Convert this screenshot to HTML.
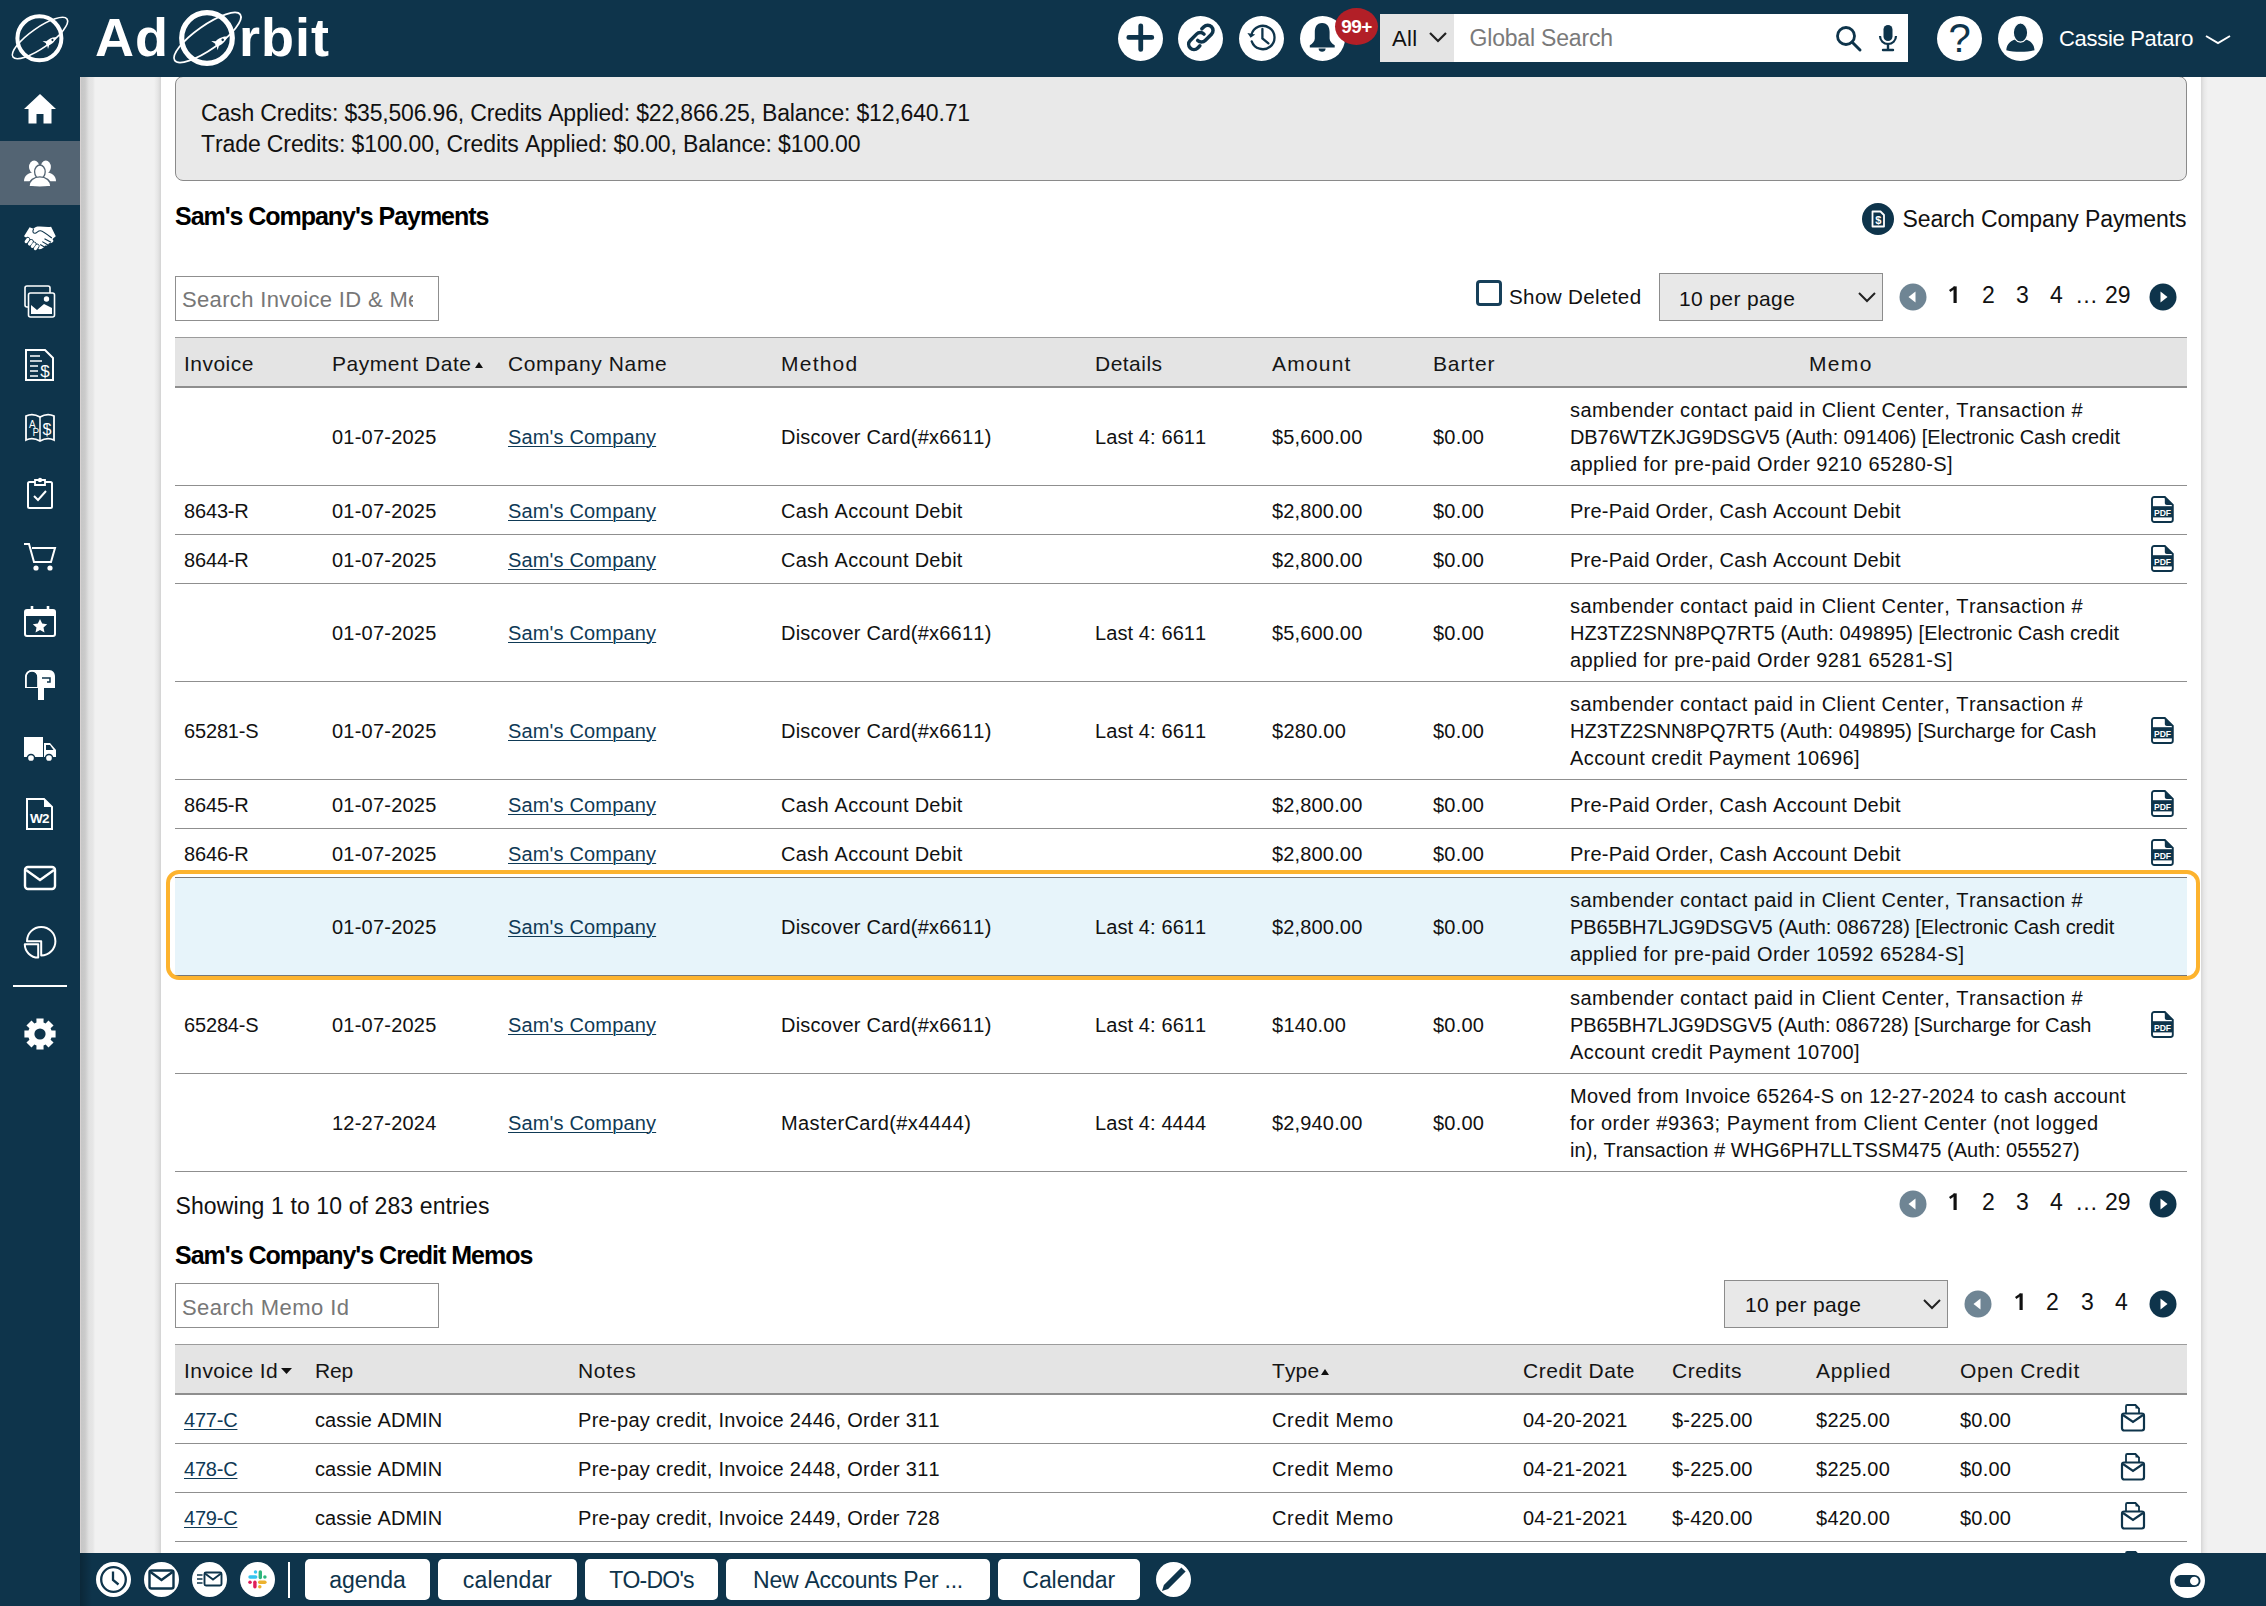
<!DOCTYPE html>
<html><head><meta charset="utf-8"><style>
*{box-sizing:border-box;margin:0;padding:0}
html,body{width:2266px;height:1606px;overflow:hidden;background:#f1f1f1;font-family:"Liberation Sans",sans-serif;color:#111}
.a{position:absolute}
.t{white-space:nowrap;font-kerning:none}
#top{left:0;top:0;width:2266px;height:77px;background:#0e344b}
#side{left:0;top:0;width:80px;height:1606px;background:#0e344b}
#gl{left:80px;top:77px;width:81px;height:1476px;background:linear-gradient(90deg,#d8d3d3 0,#d8d3d3 1px,#c6c6c6 1px,#cbcbcb 5px,#e2e2e2 9px,#e6e6e6 13px,#f1f1f1 15px,#f1f1f1 74px,#e5e5e5 78px,#d3d3d3 81px)}
#content{left:161px;top:77px;width:2040px;height:1476px;background:#fff}
#gr{left:2201px;top:77px;width:65px;height:1476px;background:linear-gradient(90deg,#d6d6d6 0,#e8e8e8 3px,#f1f1f1 7px)}
#bot{left:80px;top:1553px;width:2186px;height:53px;background:#0e344b}
#botsh{left:80px;top:1553px;width:12px;height:53px;background:linear-gradient(90deg,rgba(0,0,0,.25),rgba(0,0,0,0))}
</style></head><body>
<div class="a" id="gl"></div><div class="a" id="gr"></div><div class="a" id="content"></div>
<div class="a" style="left:175px;top:75.5px;width:2012px;height:105.5px;background:#e9e9e9;border:1.5px solid #8a8a8a;border-radius:8px"></div>
<div class="a t" style="left:201px;top:102px;font-size:23px;line-height:23px;letter-spacing:-0.167px;color:#111;font-weight:400;">Cash Credits: $35,506.96, Credits Applied: $22,866.25, Balance: $12,640.71</div>
<div class="a t" style="left:201px;top:133px;font-size:23px;line-height:23px;letter-spacing:-0.104px;color:#111;font-weight:400;">Trade Credits: $100.00, Credits Applied: $0.00, Balance: $100.00</div>
<div class="a t" style="left:175px;top:203.5px;font-size:25px;line-height:25px;letter-spacing:-1.047px;color:#000;font-weight:700;">Sam&#x27;s Company&#x27;s Payments</div>
<svg class="a" style="left:1862px;top:203px" width="32" height="32" viewBox="0 0 32 32"><circle cx="16" cy="16" r="16" fill="#0e344b"/><path d="M10.5 8.5h8l3.5 3.5v11.5h-11.5z" fill="none" stroke="#fff" stroke-width="1.8" stroke-linejoin="round"/><text x="16.3" y="20.5" font-family="Liberation Sans" font-size="11" font-weight="700" fill="#fff" text-anchor="middle">$</text></svg>
<div class="a t" style="left:1902.5px;top:208px;font-size:23px;line-height:23px;letter-spacing:-0.106px;color:#111;font-weight:400;">Search Company Payments</div>
<div class="a" style="left:175px;top:276px;width:264px;height:45px;background:#fff;border:1.5px solid #8f8f8f"></div>
<div class="a" style="left:177px;top:278px;width:236px;height:41px;overflow:hidden">
<div class="a t" style="left:5px;top:11px;font-size:22px;line-height:22px;letter-spacing:0.342px;color:#777;font-weight:400;">Search Invoice ID &amp; Memo</div>
</div>
<div class="a" style="left:1475.5px;top:279.5px;width:26px;height:26px;border:3px solid #17405a;border-radius:4px;background:#fff"></div>
<div class="a t" style="left:1509px;top:287px;font-size:20.6px;line-height:20.6px;letter-spacing:0.352px;color:#111;font-weight:400;">Show Deleted</div>
<div class="a" style="left:1659px;top:273px;width:224px;height:48px;background:#e8e8e8;border:1.5px solid #8c8c8c"></div>
<div class="a t" style="left:1679px;top:288px;font-size:21px;line-height:21px;letter-spacing:0.373px;color:#111;font-weight:400;">10 per page</div>
<svg class="a" style="left:1857px;top:289px" width="20" height="16" viewBox="0 0 20 16"><path d="M2 4l8 8 8-8" fill="none" stroke="#222" stroke-width="2"/></svg>
<svg class="a" style="left:1898.7px;top:282.5px" width="28" height="28" viewBox="0 0 28 28"><circle cx="14" cy="14" r="13.5" fill="#6f8594"/><path d="M16.5 8.5v11l-7-5.5z" fill="#fff"/></svg>
<svg class="a" style="left:2149px;top:282.5px" width="28" height="28" viewBox="0 0 28 28"><circle cx="14" cy="14" r="13.5" fill="#0e344b"/><path d="M11.5 8.5v11l7-5.5z" fill="#fff"/></svg>
<svg class="a" style="left:1947.5px;top:285.5px" width="12" height="18" viewBox="0 0 12 18"><path d="M5.5 0.4H8.7V17H5.5z" fill="#111"/><path d="M1 3.9L6.4 0.2L7.4 2.6L2.4 6.1z" fill="#111"/></svg>
<div class="a t" style="left:1982px;top:283.5px;font-size:23px;line-height:23px;letter-spacing:-0.014px;color:#111;font-weight:400;">2</div>
<div class="a t" style="left:2016px;top:283.5px;font-size:23px;line-height:23px;letter-spacing:-0.014px;color:#111;font-weight:400;">3</div>
<div class="a t" style="left:2050px;top:283.5px;font-size:23px;line-height:23px;letter-spacing:-0.014px;color:#111;font-weight:400;">4</div>
<div class="a t" style="left:2075px;top:283.5px;font-size:23px;line-height:23px;letter-spacing:-11.022px;color:#111;font-weight:400;">…</div>
<div class="a t" style="left:2105px;top:283.5px;font-size:23px;line-height:23px;letter-spacing:-0.014px;color:#111;font-weight:400;">29</div>
<div class="a" style="left:175px;top:337px;width:2012px;height:51px;background:#e4e4e4;border-top:1px solid #9c9c9c;border-bottom:2px solid #8e8e8e"></div>
<div class="a t" style="left:184px;top:353px;font-size:21px;line-height:21px;letter-spacing:0.462px;color:#151515;font-weight:400;">Invoice</div>
<div class="a t" style="left:332px;top:353px;font-size:21px;line-height:21px;letter-spacing:0.542px;color:#151515;font-weight:400;">Payment Date</div>
<div class="a t" style="left:508px;top:353px;font-size:21px;line-height:21px;letter-spacing:0.638px;color:#151515;font-weight:400;">Company Name</div>
<div class="a t" style="left:781px;top:353px;font-size:21px;line-height:21px;letter-spacing:1.233px;color:#151515;font-weight:400;">Method</div>
<div class="a t" style="left:1095px;top:353px;font-size:21px;line-height:21px;letter-spacing:0.472px;color:#151515;font-weight:400;">Details</div>
<div class="a t" style="left:1272px;top:353px;font-size:21px;line-height:21px;letter-spacing:1.193px;color:#151515;font-weight:400;">Amount</div>
<div class="a t" style="left:1433px;top:353px;font-size:21px;line-height:21px;letter-spacing:0.849px;color:#151515;font-weight:400;">Barter</div>
<div class="a t" style="left:1809px;top:353px;font-size:21px;line-height:21px;letter-spacing:1.321px;color:#151515;font-weight:400;">Memo</div>
<svg class="a" style="left:474px;top:360px" width="10" height="10" viewBox="0 0 10 10"><path d="M1 8h8l-4-6z" fill="#111"/></svg>
<div class="a" style="left:175px;top:485px;width:2012px;height:1px;background:#8f8f8f"></div>
<div class="a t" style="left:332px;top:427.0px;font-size:20px;line-height:20px;letter-spacing:0.226px;color:#111;font-weight:400;">01-07-2025</div>
<div class="a t" style="left:508px;top:427.0px;font-size:20px;line-height:20px;letter-spacing:0.159px;color:#0f3a56;font-weight:400;text-decoration:underline;text-underline-offset:1.5px;text-decoration-thickness:1px">Sam&#x27;s Company</div>
<div class="a t" style="left:781px;top:427.0px;font-size:20px;line-height:20px;letter-spacing:0.234px;color:#111;font-weight:400;">Discover Card(#x6611)</div>
<div class="a t" style="left:1095px;top:427.0px;font-size:20px;line-height:20px;letter-spacing:0.101px;color:#111;font-weight:400;">Last 4: 6611</div>
<div class="a t" style="left:1272px;top:427.0px;font-size:20px;line-height:20px;letter-spacing:0.162px;color:#111;font-weight:400;">$5,600.00</div>
<div class="a t" style="left:1433px;top:427.0px;font-size:20px;line-height:20px;letter-spacing:0.223px;color:#111;font-weight:400;">$0.00</div>
<div class="a t" style="left:1570px;top:400.0px;font-size:20px;line-height:20px;letter-spacing:0.445px;color:#111;font-weight:400;">sambender contact paid in Client Center, Transaction #</div>
<div class="a t" style="left:1570px;top:427.0px;font-size:20px;line-height:20px;letter-spacing:-0.086px;color:#111;font-weight:400;">DB76WTZKJG9DSGV5 (Auth: 091406) [Electronic Cash credit</div>
<div class="a t" style="left:1570px;top:454.0px;font-size:20px;line-height:20px;letter-spacing:0.431px;color:#111;font-weight:400;">applied for pre-paid Order 9210 65280-S]</div>
<div class="a" style="left:175px;top:534px;width:2012px;height:1px;background:#8f8f8f"></div>
<div class="a t" style="left:184px;top:500.5px;font-size:20px;line-height:20px;letter-spacing:-0.160px;color:#111;font-weight:400;">8643-R</div>
<div class="a t" style="left:332px;top:500.5px;font-size:20px;line-height:20px;letter-spacing:0.226px;color:#111;font-weight:400;">01-07-2025</div>
<div class="a t" style="left:508px;top:500.5px;font-size:20px;line-height:20px;letter-spacing:0.159px;color:#0f3a56;font-weight:400;text-decoration:underline;text-underline-offset:1.5px;text-decoration-thickness:1px">Sam&#x27;s Company</div>
<div class="a t" style="left:781px;top:500.5px;font-size:20px;line-height:20px;letter-spacing:0.274px;color:#111;font-weight:400;">Cash Account Debit</div>
<div class="a t" style="left:1272px;top:500.5px;font-size:20px;line-height:20px;letter-spacing:0.162px;color:#111;font-weight:400;">$2,800.00</div>
<div class="a t" style="left:1433px;top:500.5px;font-size:20px;line-height:20px;letter-spacing:0.223px;color:#111;font-weight:400;">$0.00</div>
<div class="a t" style="left:1570px;top:500.5px;font-size:20px;line-height:20px;letter-spacing:0.250px;color:#111;font-weight:400;">Pre-Paid Order, Cash Account Debit</div>
<div class="a" style="left:2151px;top:496.0px;width:23px;height:27px"><svg width="23" height="27" viewBox="0 0 23 27"><path d="M3.2 1h10.6l8 8v14.8c0 1.3-1 2.2-2.2 2.2H3.2C2 26 1 25.1 1 23.8V3.2C1 2 2 1 3.2 1z" fill="#fff" stroke="#0e344b" stroke-width="1.9"/><path d="M13.8 1v6c0 1.1.9 2 2 2h6z" fill="#0e344b"/><rect x="1" y="10.2" width="20.8" height="11.2" fill="#0e344b"/><text x="11.4" y="19.6" font-family="Liberation Sans" font-size="8.6" font-weight="700" fill="#fff" text-anchor="middle" letter-spacing="-0.2">PDF</text></svg></div>
<div class="a" style="left:175px;top:583px;width:2012px;height:1px;background:#8f8f8f"></div>
<div class="a t" style="left:184px;top:549.5px;font-size:20px;line-height:20px;letter-spacing:-0.160px;color:#111;font-weight:400;">8644-R</div>
<div class="a t" style="left:332px;top:549.5px;font-size:20px;line-height:20px;letter-spacing:0.226px;color:#111;font-weight:400;">01-07-2025</div>
<div class="a t" style="left:508px;top:549.5px;font-size:20px;line-height:20px;letter-spacing:0.159px;color:#0f3a56;font-weight:400;text-decoration:underline;text-underline-offset:1.5px;text-decoration-thickness:1px">Sam&#x27;s Company</div>
<div class="a t" style="left:781px;top:549.5px;font-size:20px;line-height:20px;letter-spacing:0.274px;color:#111;font-weight:400;">Cash Account Debit</div>
<div class="a t" style="left:1272px;top:549.5px;font-size:20px;line-height:20px;letter-spacing:0.162px;color:#111;font-weight:400;">$2,800.00</div>
<div class="a t" style="left:1433px;top:549.5px;font-size:20px;line-height:20px;letter-spacing:0.223px;color:#111;font-weight:400;">$0.00</div>
<div class="a t" style="left:1570px;top:549.5px;font-size:20px;line-height:20px;letter-spacing:0.250px;color:#111;font-weight:400;">Pre-Paid Order, Cash Account Debit</div>
<div class="a" style="left:2151px;top:545.0px;width:23px;height:27px"><svg width="23" height="27" viewBox="0 0 23 27"><path d="M3.2 1h10.6l8 8v14.8c0 1.3-1 2.2-2.2 2.2H3.2C2 26 1 25.1 1 23.8V3.2C1 2 2 1 3.2 1z" fill="#fff" stroke="#0e344b" stroke-width="1.9"/><path d="M13.8 1v6c0 1.1.9 2 2 2h6z" fill="#0e344b"/><rect x="1" y="10.2" width="20.8" height="11.2" fill="#0e344b"/><text x="11.4" y="19.6" font-family="Liberation Sans" font-size="8.6" font-weight="700" fill="#fff" text-anchor="middle" letter-spacing="-0.2">PDF</text></svg></div>
<div class="a" style="left:175px;top:681px;width:2012px;height:1px;background:#8f8f8f"></div>
<div class="a t" style="left:332px;top:623.0px;font-size:20px;line-height:20px;letter-spacing:0.226px;color:#111;font-weight:400;">01-07-2025</div>
<div class="a t" style="left:508px;top:623.0px;font-size:20px;line-height:20px;letter-spacing:0.159px;color:#0f3a56;font-weight:400;text-decoration:underline;text-underline-offset:1.5px;text-decoration-thickness:1px">Sam&#x27;s Company</div>
<div class="a t" style="left:781px;top:623.0px;font-size:20px;line-height:20px;letter-spacing:0.234px;color:#111;font-weight:400;">Discover Card(#x6611)</div>
<div class="a t" style="left:1095px;top:623.0px;font-size:20px;line-height:20px;letter-spacing:0.101px;color:#111;font-weight:400;">Last 4: 6611</div>
<div class="a t" style="left:1272px;top:623.0px;font-size:20px;line-height:20px;letter-spacing:0.162px;color:#111;font-weight:400;">$5,600.00</div>
<div class="a t" style="left:1433px;top:623.0px;font-size:20px;line-height:20px;letter-spacing:0.223px;color:#111;font-weight:400;">$0.00</div>
<div class="a t" style="left:1570px;top:596.0px;font-size:20px;line-height:20px;letter-spacing:0.445px;color:#111;font-weight:400;">sambender contact paid in Client Center, Transaction #</div>
<div class="a t" style="left:1570px;top:623.0px;font-size:20px;line-height:20px;letter-spacing:0.021px;color:#111;font-weight:400;">HZ3TZ2SNN8PQ7RT5 (Auth: 049895) [Electronic Cash credit</div>
<div class="a t" style="left:1570px;top:650.0px;font-size:20px;line-height:20px;letter-spacing:0.431px;color:#111;font-weight:400;">applied for pre-paid Order 9281 65281-S]</div>
<div class="a" style="left:175px;top:779px;width:2012px;height:1px;background:#8f8f8f"></div>
<div class="a t" style="left:184px;top:721.0px;font-size:20px;line-height:20px;letter-spacing:-0.158px;color:#111;font-weight:400;">65281-S</div>
<div class="a t" style="left:332px;top:721.0px;font-size:20px;line-height:20px;letter-spacing:0.226px;color:#111;font-weight:400;">01-07-2025</div>
<div class="a t" style="left:508px;top:721.0px;font-size:20px;line-height:20px;letter-spacing:0.159px;color:#0f3a56;font-weight:400;text-decoration:underline;text-underline-offset:1.5px;text-decoration-thickness:1px">Sam&#x27;s Company</div>
<div class="a t" style="left:781px;top:721.0px;font-size:20px;line-height:20px;letter-spacing:0.234px;color:#111;font-weight:400;">Discover Card(#x6611)</div>
<div class="a t" style="left:1095px;top:721.0px;font-size:20px;line-height:20px;letter-spacing:0.101px;color:#111;font-weight:400;">Last 4: 6611</div>
<div class="a t" style="left:1272px;top:721.0px;font-size:20px;line-height:20px;letter-spacing:0.255px;color:#111;font-weight:400;">$280.00</div>
<div class="a t" style="left:1433px;top:721.0px;font-size:20px;line-height:20px;letter-spacing:0.223px;color:#111;font-weight:400;">$0.00</div>
<div class="a t" style="left:1570px;top:694.0px;font-size:20px;line-height:20px;letter-spacing:0.445px;color:#111;font-weight:400;">sambender contact paid in Client Center, Transaction #</div>
<div class="a t" style="left:1570px;top:721.0px;font-size:20px;line-height:20px;letter-spacing:-0.011px;color:#111;font-weight:400;">HZ3TZ2SNN8PQ7RT5 (Auth: 049895) [Surcharge for Cash</div>
<div class="a t" style="left:1570px;top:748.0px;font-size:20px;line-height:20px;letter-spacing:0.418px;color:#111;font-weight:400;">Account credit Payment 10696]</div>
<div class="a" style="left:2151px;top:716.5px;width:23px;height:27px"><svg width="23" height="27" viewBox="0 0 23 27"><path d="M3.2 1h10.6l8 8v14.8c0 1.3-1 2.2-2.2 2.2H3.2C2 26 1 25.1 1 23.8V3.2C1 2 2 1 3.2 1z" fill="#fff" stroke="#0e344b" stroke-width="1.9"/><path d="M13.8 1v6c0 1.1.9 2 2 2h6z" fill="#0e344b"/><rect x="1" y="10.2" width="20.8" height="11.2" fill="#0e344b"/><text x="11.4" y="19.6" font-family="Liberation Sans" font-size="8.6" font-weight="700" fill="#fff" text-anchor="middle" letter-spacing="-0.2">PDF</text></svg></div>
<div class="a" style="left:175px;top:828px;width:2012px;height:1px;background:#8f8f8f"></div>
<div class="a t" style="left:184px;top:794.5px;font-size:20px;line-height:20px;letter-spacing:-0.160px;color:#111;font-weight:400;">8645-R</div>
<div class="a t" style="left:332px;top:794.5px;font-size:20px;line-height:20px;letter-spacing:0.226px;color:#111;font-weight:400;">01-07-2025</div>
<div class="a t" style="left:508px;top:794.5px;font-size:20px;line-height:20px;letter-spacing:0.159px;color:#0f3a56;font-weight:400;text-decoration:underline;text-underline-offset:1.5px;text-decoration-thickness:1px">Sam&#x27;s Company</div>
<div class="a t" style="left:781px;top:794.5px;font-size:20px;line-height:20px;letter-spacing:0.274px;color:#111;font-weight:400;">Cash Account Debit</div>
<div class="a t" style="left:1272px;top:794.5px;font-size:20px;line-height:20px;letter-spacing:0.162px;color:#111;font-weight:400;">$2,800.00</div>
<div class="a t" style="left:1433px;top:794.5px;font-size:20px;line-height:20px;letter-spacing:0.223px;color:#111;font-weight:400;">$0.00</div>
<div class="a t" style="left:1570px;top:794.5px;font-size:20px;line-height:20px;letter-spacing:0.250px;color:#111;font-weight:400;">Pre-Paid Order, Cash Account Debit</div>
<div class="a" style="left:2151px;top:790.0px;width:23px;height:27px"><svg width="23" height="27" viewBox="0 0 23 27"><path d="M3.2 1h10.6l8 8v14.8c0 1.3-1 2.2-2.2 2.2H3.2C2 26 1 25.1 1 23.8V3.2C1 2 2 1 3.2 1z" fill="#fff" stroke="#0e344b" stroke-width="1.9"/><path d="M13.8 1v6c0 1.1.9 2 2 2h6z" fill="#0e344b"/><rect x="1" y="10.2" width="20.8" height="11.2" fill="#0e344b"/><text x="11.4" y="19.6" font-family="Liberation Sans" font-size="8.6" font-weight="700" fill="#fff" text-anchor="middle" letter-spacing="-0.2">PDF</text></svg></div>
<div class="a" style="left:175px;top:877px;width:2012px;height:1px;background:#8f8f8f"></div>
<div class="a t" style="left:184px;top:843.5px;font-size:20px;line-height:20px;letter-spacing:-0.160px;color:#111;font-weight:400;">8646-R</div>
<div class="a t" style="left:332px;top:843.5px;font-size:20px;line-height:20px;letter-spacing:0.226px;color:#111;font-weight:400;">01-07-2025</div>
<div class="a t" style="left:508px;top:843.5px;font-size:20px;line-height:20px;letter-spacing:0.159px;color:#0f3a56;font-weight:400;text-decoration:underline;text-underline-offset:1.5px;text-decoration-thickness:1px">Sam&#x27;s Company</div>
<div class="a t" style="left:781px;top:843.5px;font-size:20px;line-height:20px;letter-spacing:0.274px;color:#111;font-weight:400;">Cash Account Debit</div>
<div class="a t" style="left:1272px;top:843.5px;font-size:20px;line-height:20px;letter-spacing:0.162px;color:#111;font-weight:400;">$2,800.00</div>
<div class="a t" style="left:1433px;top:843.5px;font-size:20px;line-height:20px;letter-spacing:0.223px;color:#111;font-weight:400;">$0.00</div>
<div class="a t" style="left:1570px;top:843.5px;font-size:20px;line-height:20px;letter-spacing:0.250px;color:#111;font-weight:400;">Pre-Paid Order, Cash Account Debit</div>
<div class="a" style="left:2151px;top:839.0px;width:23px;height:27px"><svg width="23" height="27" viewBox="0 0 23 27"><path d="M3.2 1h10.6l8 8v14.8c0 1.3-1 2.2-2.2 2.2H3.2C2 26 1 25.1 1 23.8V3.2C1 2 2 1 3.2 1z" fill="#fff" stroke="#0e344b" stroke-width="1.9"/><path d="M13.8 1v6c0 1.1.9 2 2 2h6z" fill="#0e344b"/><rect x="1" y="10.2" width="20.8" height="11.2" fill="#0e344b"/><text x="11.4" y="19.6" font-family="Liberation Sans" font-size="8.6" font-weight="700" fill="#fff" text-anchor="middle" letter-spacing="-0.2">PDF</text></svg></div>
<div class="a" style="left:175px;top:877px;width:2012px;height:98px;background:#e7f4fa"></div>
<div class="a" style="left:175px;top:975px;width:2012px;height:1px;background:#777"></div>
<div class="a" style="left:175px;top:877px;width:2012px;height:1px;background:#7a7a7a"></div>
<div class="a t" style="left:332px;top:917.0px;font-size:20px;line-height:20px;letter-spacing:0.226px;color:#111;font-weight:400;">01-07-2025</div>
<div class="a t" style="left:508px;top:917.0px;font-size:20px;line-height:20px;letter-spacing:0.159px;color:#0f3a56;font-weight:400;text-decoration:underline;text-underline-offset:1.5px;text-decoration-thickness:1px">Sam&#x27;s Company</div>
<div class="a t" style="left:781px;top:917.0px;font-size:20px;line-height:20px;letter-spacing:0.234px;color:#111;font-weight:400;">Discover Card(#x6611)</div>
<div class="a t" style="left:1095px;top:917.0px;font-size:20px;line-height:20px;letter-spacing:0.101px;color:#111;font-weight:400;">Last 4: 6611</div>
<div class="a t" style="left:1272px;top:917.0px;font-size:20px;line-height:20px;letter-spacing:0.162px;color:#111;font-weight:400;">$2,800.00</div>
<div class="a t" style="left:1433px;top:917.0px;font-size:20px;line-height:20px;letter-spacing:0.223px;color:#111;font-weight:400;">$0.00</div>
<div class="a t" style="left:1570px;top:890.0px;font-size:20px;line-height:20px;letter-spacing:0.445px;color:#111;font-weight:400;">sambender contact paid in Client Center, Transaction #</div>
<div class="a t" style="left:1570px;top:917.0px;font-size:20px;line-height:20px;letter-spacing:-0.049px;color:#111;font-weight:400;">PB65BH7LJG9DSGV5 (Auth: 086728) [Electronic Cash credit</div>
<div class="a t" style="left:1570px;top:944.0px;font-size:20px;line-height:20px;letter-spacing:0.429px;color:#111;font-weight:400;">applied for pre-paid Order 10592 65284-S]</div>
<div class="a" style="left:175px;top:1073px;width:2012px;height:1px;background:#8f8f8f"></div>
<div class="a t" style="left:184px;top:1015.0px;font-size:20px;line-height:20px;letter-spacing:-0.158px;color:#111;font-weight:400;">65284-S</div>
<div class="a t" style="left:332px;top:1015.0px;font-size:20px;line-height:20px;letter-spacing:0.226px;color:#111;font-weight:400;">01-07-2025</div>
<div class="a t" style="left:508px;top:1015.0px;font-size:20px;line-height:20px;letter-spacing:0.159px;color:#0f3a56;font-weight:400;text-decoration:underline;text-underline-offset:1.5px;text-decoration-thickness:1px">Sam&#x27;s Company</div>
<div class="a t" style="left:781px;top:1015.0px;font-size:20px;line-height:20px;letter-spacing:0.234px;color:#111;font-weight:400;">Discover Card(#x6611)</div>
<div class="a t" style="left:1095px;top:1015.0px;font-size:20px;line-height:20px;letter-spacing:0.101px;color:#111;font-weight:400;">Last 4: 6611</div>
<div class="a t" style="left:1272px;top:1015.0px;font-size:20px;line-height:20px;letter-spacing:0.255px;color:#111;font-weight:400;">$140.00</div>
<div class="a t" style="left:1433px;top:1015.0px;font-size:20px;line-height:20px;letter-spacing:0.223px;color:#111;font-weight:400;">$0.00</div>
<div class="a t" style="left:1570px;top:988.0px;font-size:20px;line-height:20px;letter-spacing:0.445px;color:#111;font-weight:400;">sambender contact paid in Client Center, Transaction #</div>
<div class="a t" style="left:1570px;top:1015.0px;font-size:20px;line-height:20px;letter-spacing:-0.087px;color:#111;font-weight:400;">PB65BH7LJG9DSGV5 (Auth: 086728) [Surcharge for Cash</div>
<div class="a t" style="left:1570px;top:1042.0px;font-size:20px;line-height:20px;letter-spacing:0.418px;color:#111;font-weight:400;">Account credit Payment 10700]</div>
<div class="a" style="left:2151px;top:1010.5px;width:23px;height:27px"><svg width="23" height="27" viewBox="0 0 23 27"><path d="M3.2 1h10.6l8 8v14.8c0 1.3-1 2.2-2.2 2.2H3.2C2 26 1 25.1 1 23.8V3.2C1 2 2 1 3.2 1z" fill="#fff" stroke="#0e344b" stroke-width="1.9"/><path d="M13.8 1v6c0 1.1.9 2 2 2h6z" fill="#0e344b"/><rect x="1" y="10.2" width="20.8" height="11.2" fill="#0e344b"/><text x="11.4" y="19.6" font-family="Liberation Sans" font-size="8.6" font-weight="700" fill="#fff" text-anchor="middle" letter-spacing="-0.2">PDF</text></svg></div>
<div class="a" style="left:175px;top:1171px;width:2012px;height:1px;background:#8f8f8f"></div>
<div class="a t" style="left:332px;top:1113.0px;font-size:20px;line-height:20px;letter-spacing:0.226px;color:#111;font-weight:400;">12-27-2024</div>
<div class="a t" style="left:508px;top:1113.0px;font-size:20px;line-height:20px;letter-spacing:0.159px;color:#0f3a56;font-weight:400;text-decoration:underline;text-underline-offset:1.5px;text-decoration-thickness:1px">Sam&#x27;s Company</div>
<div class="a t" style="left:781px;top:1113.0px;font-size:20px;line-height:20px;letter-spacing:0.384px;color:#111;font-weight:400;">MasterCard(#x4444)</div>
<div class="a t" style="left:1095px;top:1113.0px;font-size:20px;line-height:20px;letter-spacing:0.099px;color:#111;font-weight:400;">Last 4: 4444</div>
<div class="a t" style="left:1272px;top:1113.0px;font-size:20px;line-height:20px;letter-spacing:0.162px;color:#111;font-weight:400;">$2,940.00</div>
<div class="a t" style="left:1433px;top:1113.0px;font-size:20px;line-height:20px;letter-spacing:0.223px;color:#111;font-weight:400;">$0.00</div>
<div class="a t" style="left:1570px;top:1086.0px;font-size:20px;line-height:20px;letter-spacing:0.338px;color:#111;font-weight:400;">Moved from Invoice 65264-S on 12-27-2024 to cash account</div>
<div class="a t" style="left:1570px;top:1113.0px;font-size:20px;line-height:20px;letter-spacing:0.518px;color:#111;font-weight:400;">for order #9363; Payment from Client Center (not logged</div>
<div class="a t" style="left:1570px;top:1140.0px;font-size:20px;line-height:20px;letter-spacing:0.035px;color:#111;font-weight:400;">in), Transaction # WHG6PH7LLTSSM475 (Auth: 055527)</div>
<div class="a" style="left:166px;top:870px;width:2034px;height:110px;border:4px solid #fdb32e;border-radius:13px"></div>
<div class="a t" style="left:175.5px;top:1194.5px;font-size:23px;line-height:23px;letter-spacing:0.113px;color:#111;font-weight:400;">Showing 1 to 10 of 283 entries</div>
<svg class="a" style="left:1898.7px;top:1189.5px" width="28" height="28" viewBox="0 0 28 28"><circle cx="14" cy="14" r="13.5" fill="#6f8594"/><path d="M16.5 8.5v11l-7-5.5z" fill="#fff"/></svg>
<svg class="a" style="left:2149px;top:1189.5px" width="28" height="28" viewBox="0 0 28 28"><circle cx="14" cy="14" r="13.5" fill="#0e344b"/><path d="M11.5 8.5v11l7-5.5z" fill="#fff"/></svg>
<svg class="a" style="left:1947.5px;top:1192.5px" width="12" height="18" viewBox="0 0 12 18"><path d="M5.5 0.4H8.7V17H5.5z" fill="#111"/><path d="M1 3.9L6.4 0.2L7.4 2.6L2.4 6.1z" fill="#111"/></svg>
<div class="a t" style="left:1982px;top:1190.5px;font-size:23px;line-height:23px;letter-spacing:-0.014px;color:#111;font-weight:400;">2</div>
<div class="a t" style="left:2016px;top:1190.5px;font-size:23px;line-height:23px;letter-spacing:-0.014px;color:#111;font-weight:400;">3</div>
<div class="a t" style="left:2050px;top:1190.5px;font-size:23px;line-height:23px;letter-spacing:-0.014px;color:#111;font-weight:400;">4</div>
<div class="a t" style="left:2075px;top:1190.5px;font-size:23px;line-height:23px;letter-spacing:-11.022px;color:#111;font-weight:400;">…</div>
<div class="a t" style="left:2105px;top:1190.5px;font-size:23px;line-height:23px;letter-spacing:-0.014px;color:#111;font-weight:400;">29</div>
<div class="a t" style="left:175px;top:1242.5px;font-size:25px;line-height:25px;letter-spacing:-1.011px;color:#000;font-weight:700;">Sam&#x27;s Company&#x27;s Credit Memos</div>
<div class="a" style="left:175px;top:1283px;width:264px;height:45px;background:#fff;border:1.5px solid #8f8f8f"></div>
<div class="a t" style="left:182px;top:1296.5px;font-size:22px;line-height:22px;letter-spacing:0.425px;color:#777;font-weight:400;">Search Memo Id</div>
<div class="a" style="left:1724px;top:1280px;width:224px;height:48px;background:#e8e8e8;border:1.5px solid #8c8c8c"></div>
<div class="a t" style="left:1745px;top:1294px;font-size:21px;line-height:21px;letter-spacing:0.373px;color:#111;font-weight:400;">10 per page</div>
<svg class="a" style="left:1922px;top:1296px" width="20" height="16" viewBox="0 0 20 16"><path d="M2 4l8 8 8-8" fill="none" stroke="#222" stroke-width="2"/></svg>
<svg class="a" style="left:1964px;top:1289.8px" width="28" height="28" viewBox="0 0 28 28"><circle cx="14" cy="14" r="13.5" fill="#6f8594"/><path d="M16.5 8.5v11l-7-5.5z" fill="#fff"/></svg>
<svg class="a" style="left:2149px;top:1289.8px" width="28" height="28" viewBox="0 0 28 28"><circle cx="14" cy="14" r="13.5" fill="#0e344b"/><path d="M11.5 8.5v11l7-5.5z" fill="#fff"/></svg>
<svg class="a" style="left:2013.5px;top:1292.5px" width="12" height="18" viewBox="0 0 12 18"><path d="M5.5 0.4H8.7V17H5.5z" fill="#111"/><path d="M1 3.9L6.4 0.2L7.4 2.6L2.4 6.1z" fill="#111"/></svg>
<div class="a t" style="left:2046px;top:1290.5px;font-size:23px;line-height:23px;letter-spacing:-0.014px;color:#111;font-weight:400;">2</div>
<div class="a t" style="left:2081px;top:1290.5px;font-size:23px;line-height:23px;letter-spacing:-0.014px;color:#111;font-weight:400;">3</div>
<div class="a t" style="left:2115px;top:1290.5px;font-size:23px;line-height:23px;letter-spacing:-0.014px;color:#111;font-weight:400;">4</div>
<div class="a" style="left:175px;top:1344px;width:2012px;height:51px;background:#e4e4e4;border-top:1px solid #9c9c9c;border-bottom:2px solid #8e8e8e"></div>
<div class="a t" style="left:184px;top:1360px;font-size:21px;line-height:21px;letter-spacing:0.433px;color:#151515;font-weight:400;">Invoice Id</div>
<div class="a t" style="left:315px;top:1360px;font-size:21px;line-height:21px;letter-spacing:-0.164px;color:#151515;font-weight:400;">Rep</div>
<div class="a t" style="left:578px;top:1360px;font-size:21px;line-height:21px;letter-spacing:0.694px;color:#151515;font-weight:400;">Notes</div>
<div class="a t" style="left:1272px;top:1360px;font-size:21px;line-height:21px;letter-spacing:0.124px;color:#151515;font-weight:400;">Type</div>
<div class="a t" style="left:1523px;top:1360px;font-size:21px;line-height:21px;letter-spacing:0.526px;color:#151515;font-weight:400;">Credit Date</div>
<div class="a t" style="left:1672px;top:1360px;font-size:21px;line-height:21px;letter-spacing:0.487px;color:#151515;font-weight:400;">Credits</div>
<div class="a t" style="left:1816px;top:1360px;font-size:21px;line-height:21px;letter-spacing:0.718px;color:#151515;font-weight:400;">Applied</div>
<div class="a t" style="left:1960px;top:1360px;font-size:21px;line-height:21px;letter-spacing:0.599px;color:#151515;font-weight:400;">Open Credit</div>
<svg class="a" style="left:280px;top:1366px" width="13" height="10" viewBox="0 0 13 10"><path d="M1 2h11l-5.5 6z" fill="#111"/></svg>
<svg class="a" style="left:1320px;top:1367px" width="10" height="10" viewBox="0 0 10 10"><path d="M1 8h8l-4-6z" fill="#111"/></svg>
<div class="a" style="left:175px;top:1443px;width:2012px;height:1px;background:#8f8f8f"></div>
<div class="a t" style="left:184px;top:1409.5px;font-size:20px;line-height:20px;letter-spacing:-0.208px;color:#0f3a56;font-weight:400;text-decoration:underline;text-underline-offset:1.5px;text-decoration-thickness:1px">477-C</div>
<div class="a t" style="left:315px;top:1409.5px;font-size:20px;line-height:20px;letter-spacing:0.043px;color:#111;font-weight:400;">cassie ADMIN</div>
<div class="a t" style="left:578px;top:1409.5px;font-size:20px;line-height:20px;letter-spacing:0.303px;color:#111;font-weight:400;">Pre-pay credit, Invoice 2446, Order 311</div>
<div class="a t" style="left:1272px;top:1409.5px;font-size:20px;line-height:20px;letter-spacing:0.653px;color:#111;font-weight:400;">Credit Memo</div>
<div class="a t" style="left:1523px;top:1409.5px;font-size:20px;line-height:20px;letter-spacing:0.226px;color:#111;font-weight:400;">04-20-2021</div>
<div class="a t" style="left:1672px;top:1409.5px;font-size:20px;line-height:20px;letter-spacing:0.196px;color:#111;font-weight:400;">$-225.00</div>
<div class="a t" style="left:1816px;top:1409.5px;font-size:20px;line-height:20px;letter-spacing:0.255px;color:#111;font-weight:400;">$225.00</div>
<div class="a t" style="left:1960px;top:1409.5px;font-size:20px;line-height:20px;letter-spacing:0.223px;color:#111;font-weight:400;">$0.00</div>
<div class="a" style="left:2120px;top:1404.0px;width:26px;height:28px"><svg width="26" height="28" viewBox="0 0 26 28"><path d="M6 9V2.2C6 1.5 6.5 1 7.2 1h8.3l3.5 3.5V9" fill="#fff" stroke="#0e344b" stroke-width="1.8"/><path d="M15.5 1v3.5H19z" fill="#0e344b"/><rect x="2" y="9.5" width="22" height="17" rx="2.2" fill="#fff" stroke="#0e344b" stroke-width="2.2"/><path d="M3 11l10 7 10-7" fill="none" stroke="#0e344b" stroke-width="2.2"/></svg></div>
<div class="a" style="left:175px;top:1492px;width:2012px;height:1px;background:#8f8f8f"></div>
<div class="a t" style="left:184px;top:1458.5px;font-size:20px;line-height:20px;letter-spacing:-0.208px;color:#0f3a56;font-weight:400;text-decoration:underline;text-underline-offset:1.5px;text-decoration-thickness:1px">478-C</div>
<div class="a t" style="left:315px;top:1458.5px;font-size:20px;line-height:20px;letter-spacing:0.043px;color:#111;font-weight:400;">cassie ADMIN</div>
<div class="a t" style="left:578px;top:1458.5px;font-size:20px;line-height:20px;letter-spacing:0.303px;color:#111;font-weight:400;">Pre-pay credit, Invoice 2448, Order 311</div>
<div class="a t" style="left:1272px;top:1458.5px;font-size:20px;line-height:20px;letter-spacing:0.653px;color:#111;font-weight:400;">Credit Memo</div>
<div class="a t" style="left:1523px;top:1458.5px;font-size:20px;line-height:20px;letter-spacing:0.226px;color:#111;font-weight:400;">04-21-2021</div>
<div class="a t" style="left:1672px;top:1458.5px;font-size:20px;line-height:20px;letter-spacing:0.196px;color:#111;font-weight:400;">$-225.00</div>
<div class="a t" style="left:1816px;top:1458.5px;font-size:20px;line-height:20px;letter-spacing:0.255px;color:#111;font-weight:400;">$225.00</div>
<div class="a t" style="left:1960px;top:1458.5px;font-size:20px;line-height:20px;letter-spacing:0.223px;color:#111;font-weight:400;">$0.00</div>
<div class="a" style="left:2120px;top:1453.0px;width:26px;height:28px"><svg width="26" height="28" viewBox="0 0 26 28"><path d="M6 9V2.2C6 1.5 6.5 1 7.2 1h8.3l3.5 3.5V9" fill="#fff" stroke="#0e344b" stroke-width="1.8"/><path d="M15.5 1v3.5H19z" fill="#0e344b"/><rect x="2" y="9.5" width="22" height="17" rx="2.2" fill="#fff" stroke="#0e344b" stroke-width="2.2"/><path d="M3 11l10 7 10-7" fill="none" stroke="#0e344b" stroke-width="2.2"/></svg></div>
<div class="a" style="left:175px;top:1541px;width:2012px;height:1px;background:#8f8f8f"></div>
<div class="a t" style="left:184px;top:1507.5px;font-size:20px;line-height:20px;letter-spacing:-0.208px;color:#0f3a56;font-weight:400;text-decoration:underline;text-underline-offset:1.5px;text-decoration-thickness:1px">479-C</div>
<div class="a t" style="left:315px;top:1507.5px;font-size:20px;line-height:20px;letter-spacing:0.043px;color:#111;font-weight:400;">cassie ADMIN</div>
<div class="a t" style="left:578px;top:1507.5px;font-size:20px;line-height:20px;letter-spacing:0.302px;color:#111;font-weight:400;">Pre-pay credit, Invoice 2449, Order 728</div>
<div class="a t" style="left:1272px;top:1507.5px;font-size:20px;line-height:20px;letter-spacing:0.653px;color:#111;font-weight:400;">Credit Memo</div>
<div class="a t" style="left:1523px;top:1507.5px;font-size:20px;line-height:20px;letter-spacing:0.226px;color:#111;font-weight:400;">04-21-2021</div>
<div class="a t" style="left:1672px;top:1507.5px;font-size:20px;line-height:20px;letter-spacing:0.196px;color:#111;font-weight:400;">$-420.00</div>
<div class="a t" style="left:1816px;top:1507.5px;font-size:20px;line-height:20px;letter-spacing:0.255px;color:#111;font-weight:400;">$420.00</div>
<div class="a t" style="left:1960px;top:1507.5px;font-size:20px;line-height:20px;letter-spacing:0.223px;color:#111;font-weight:400;">$0.00</div>
<div class="a" style="left:2120px;top:1502.0px;width:26px;height:28px"><svg width="26" height="28" viewBox="0 0 26 28"><path d="M6 9V2.2C6 1.5 6.5 1 7.2 1h8.3l3.5 3.5V9" fill="#fff" stroke="#0e344b" stroke-width="1.8"/><path d="M15.5 1v3.5H19z" fill="#0e344b"/><rect x="2" y="9.5" width="22" height="17" rx="2.2" fill="#fff" stroke="#0e344b" stroke-width="2.2"/><path d="M3 11l10 7 10-7" fill="none" stroke="#0e344b" stroke-width="2.2"/></svg></div>
<div class="a" style="left:175px;top:1590px;width:2012px;height:1px;background:#8f8f8f"></div>
<div class="a t" style="left:184px;top:1556.5px;font-size:20px;line-height:20px;letter-spacing:-0.208px;color:#0f3a56;font-weight:400;text-decoration:underline;text-underline-offset:1.5px;text-decoration-thickness:1px">480-C</div>
<div class="a t" style="left:315px;top:1556.5px;font-size:20px;line-height:20px;letter-spacing:0.043px;color:#111;font-weight:400;">cassie ADMIN</div>
<div class="a t" style="left:578px;top:1556.5px;font-size:20px;line-height:20px;letter-spacing:0.000px;color:#111;font-weight:400;"></div>
<div class="a t" style="left:1272px;top:1556.5px;font-size:20px;line-height:20px;letter-spacing:0.653px;color:#111;font-weight:400;">Credit Memo</div>
<div class="a t" style="left:1523px;top:1556.5px;font-size:20px;line-height:20px;letter-spacing:0.000px;color:#111;font-weight:400;"></div>
<div class="a t" style="left:1672px;top:1556.5px;font-size:20px;line-height:20px;letter-spacing:0.000px;color:#111;font-weight:400;"></div>
<div class="a t" style="left:1816px;top:1556.5px;font-size:20px;line-height:20px;letter-spacing:0.000px;color:#111;font-weight:400;"></div>
<div class="a t" style="left:1960px;top:1556.5px;font-size:20px;line-height:20px;letter-spacing:0.223px;color:#111;font-weight:400;">$0.00</div>
<div class="a" style="left:2120px;top:1551.0px;width:26px;height:28px"><svg width="26" height="28" viewBox="0 0 26 28"><path d="M6 9V2.2C6 1.5 6.5 1 7.2 1h8.3l3.5 3.5V9" fill="#fff" stroke="#0e344b" stroke-width="1.8"/><path d="M15.5 1v3.5H19z" fill="#0e344b"/><rect x="2" y="9.5" width="22" height="17" rx="2.2" fill="#fff" stroke="#0e344b" stroke-width="2.2"/><path d="M3 11l10 7 10-7" fill="none" stroke="#0e344b" stroke-width="2.2"/></svg></div>
<div class="a" id="top"></div>
<svg class="a" style="left:0;top:0" width="340" height="77" viewBox="0 0 340 77">
<g fill="none" stroke="#fff">
 <circle cx="207" cy="38" r="25.3" stroke-width="5.2"/>
 <ellipse cx="207.5" cy="37.5" rx="40" ry="12" transform="rotate(-35 207.5 37.5)" stroke-width="1.8"/>
</g>
<g transform="translate(221 41) rotate(-35) scale(1.15)"><path d="M6.5 0C4 -2.6 -1 -3 -4 -2.5L-7 -4.8L-5.5 -1L-6 0L-5.5 1L-7 4.8L-4 2.5C-1 3 4 2.6 6.5 0Z" fill="#fff"/><circle cx="1.8" cy="0" r="1.1" fill="#0e344b"/></g>
<text x="95" y="56.3" font-family="Liberation Sans" font-size="54" font-weight="700" fill="#fff" letter-spacing="1">Ad</text>
<text x="239" y="56.3" font-family="Liberation Sans" font-size="54" font-weight="700" fill="#fff" letter-spacing="1">rbit</text>
</svg>
<svg class="a" style="left:1117.7px;top:15.9px" width="45" height="45" viewBox="0 0 45 45"><circle cx="22.5" cy="22.5" r="22.5" fill="#fff"/><path d="M22.75 9.8V33.4M10.8 21.4H33.8" stroke="#0e344b" stroke-width="4.8" stroke-linecap="round"/></svg>
<svg class="a" style="left:1177.8px;top:15.8px" width="45" height="45" viewBox="0 0 45 45"><circle cx="22.5" cy="22.5" r="22.5" fill="#fff"/><g fill="none" stroke="#0e344b" stroke-width="3.5" stroke-linecap="round"><path d="M23.84 12.81L25.96 10.69A5.3 5.3 0 0 1 33.46 18.19L27.17 24.48A5.3 5.3 0 0 1 19.67 24.48"/><path d="M21.86 29.79L19.74 31.91A5.3 5.3 0 0 1 12.24 24.41L18.53 18.12A5.3 5.3 0 0 1 26.03 18.12"/></g></svg>
<svg class="a" style="left:1239px;top:15.8px" width="45" height="45" viewBox="0 0 45 45"><circle cx="22.5" cy="22.5" r="22.5" fill="#fff"/><g fill="none" stroke="#0e344b" stroke-width="2.3" stroke-linecap="round"><path d="M12.45 18.67A11.7 11.7 0 1 1 12.74 25.31"/><path d="M23.4 12.9V22.5L29.4 27.4"/></g><path d="M8.4 17L16.2 18.6L11.6 21.8z" fill="#0e344b"/></svg>
<svg class="a" style="left:1300.2px;top:16px" width="45" height="45" viewBox="0 0 45 45"><circle cx="22.5" cy="22.5" r="22.5" fill="#fff"/><path d="M22.1 6.9C16.5 6.9 14.8 11.5 14.8 16V22.5C14.8 25.5 12.5 27.5 9.8 29.3V31.4H34.7V29.3C32 27.5 29.6 25.5 29.6 22.5V16C29.6 11.5 27.7 6.9 22.1 6.9Z" fill="#0e344b"/><path d="M18.6 32.4H25.6C25.6 34.5 24 35.7 22.1 35.7C20.2 35.7 18.6 34.5 18.6 32.4Z" fill="#0e344b"/></svg>
<div class="a" style="left:1335px;top:8px;width:43px;height:37px;border-radius:50%;background:#b21f27"></div>
<div class="a t" style="left:1356.5px;transform:translateX(-50%);top:17px;font-size:19px;line-height:19px;letter-spacing:-0.600px;color:#fff;font-weight:700;">99+</div>
<div class="a" style="left:1380px;top:14px;width:528px;height:48px;background:#fff"></div>
<div class="a" style="left:1380px;top:14px;width:74px;height:48px;background:#e4e4e4"></div>
<div class="a t" style="left:1392px;top:28px;font-size:22px;line-height:22px;letter-spacing:0.306px;color:#111;font-weight:400;">All</div>
<svg class="a" style="left:1428px;top:30px" width="20" height="14" viewBox="0 0 20 14"><path d="M2 3l8 8 8-8" fill="none" stroke="#222" stroke-width="2.2"/></svg>
<div class="a t" style="left:1469.5px;top:27px;font-size:23px;line-height:23px;letter-spacing:-0.185px;color:#7a7a7a;font-weight:400;">Global Search</div>
<svg class="a" style="left:1834px;top:24px" width="30" height="30" viewBox="0 0 30 30"><circle cx="12" cy="12" r="8.5" fill="none" stroke="#0e344b" stroke-width="2.8"/><path d="M18 18l8 8" stroke="#0e344b" stroke-width="3" stroke-linecap="round"/></svg>
<svg class="a" style="left:1876px;top:23px" width="24" height="30" viewBox="0 0 24 30"><rect x="7.5" y="2" width="9" height="16" rx="4.5" fill="#0e344b"/><path d="M4 13a8 8 0 0 0 16 0" fill="none" stroke="#0e344b" stroke-width="2.2"/><path d="M12 21v5M7 27h10" stroke="#0e344b" stroke-width="2.4" stroke-linecap="round"/></svg>
<svg class="a" style="left:1936.8px;top:16px" width="45" height="45" viewBox="0 0 45 45"><circle cx="22.5" cy="22.5" r="22.5" fill="#fff"/><text x="22.5" y="35.5" font-family="Liberation Sans" font-size="40" font-weight="400" fill="#0e344b" text-anchor="middle">?</text></svg>
<svg class="a" style="left:1997.7px;top:16px" width="45" height="45" viewBox="0 0 45 45"><circle cx="22.5" cy="22.5" r="22.5" fill="#fff"/><path d="M8.3 34.2C8.6 27.5 13.5 23.8 19 23.2L22.5 26L26 23.2C31.5 23.8 36.2 27.5 36.5 34.2C29 36.4 16 36.4 8.3 34.2z" fill="#0e344b"/><ellipse cx="22.5" cy="16.6" rx="7.2" ry="9.6" fill="#0e344b" stroke="#fff" stroke-width="1.2"/></svg>
<div class="a t" style="left:2059px;top:27.700000000000003px;font-size:22px;line-height:22px;letter-spacing:-0.306px;color:#fff;font-weight:400;">Cassie Pataro</div>
<svg class="a" style="left:2204px;top:32px" width="28" height="14" viewBox="0 0 28 14"><path d="M2 4l12 7 12-7" fill="none" stroke="#fff" stroke-width="2"/></svg>
<div class="a" id="side"></div>
<div class="a" style="left:0px;top:141px;width:80px;height:64px;background:#536473"></div>
<svg class="a" style="left:0;top:0" width="80" height="77" viewBox="0 0 80 77"><g fill="none" stroke="#fff">
 <circle cx="39.4" cy="38.3" r="22" stroke-width="4"/>
 <ellipse cx="40" cy="38" rx="33" ry="10" transform="rotate(-35 40 38)" stroke-width="1.6"/></g>
<g transform="translate(51 41) rotate(-35)"><path d="M6.5 0C4 -2.6 -1 -3 -4 -2.5L-7 -4.8L-5.5 -1L-6 0L-5.5 1L-7 4.8L-4 2.5C-1 3 4 2.6 6.5 0Z" fill="#fff"/><circle cx="1.8" cy="0" r="1.1" fill="#0e344b"/></g></svg>
<svg class="a" style="left:24px;top:92px" width="32" height="32" viewBox="0 0 32 32" overflow="visible"><path d="M16 2L0 17h4.5v14.5h8V22h7v9.5h8V17H32z" fill="#fff"/></svg>
<svg class="a" style="left:24px;top:156.5px" width="32" height="32" viewBox="0 0 32 32" overflow="visible"><g fill="#fff"><ellipse cx="10.2" cy="10" rx="5.2" ry="6.4"/><ellipse cx="21.8" cy="10" rx="5.1" ry="6.4"/><path d="M0 24.3C0 19 4.5 15.3 10 15.3S20 19 20 24.3z"/><path d="M12 24.3C12 19 16.5 15.3 22 15.3S32 19 32 24.3z"/></g><g fill="#fff" stroke="#536473" stroke-width="1.3"><ellipse cx="15.9" cy="14.8" rx="5.3" ry="6.8"/><path d="M5 29.3C5 23.5 10 19.8 15.9 19.8S26.8 23.5 26.8 29.3Q15.9 30.8 5 29.3z"/></g></svg>
<svg class="a" style="left:24px;top:220.5px" width="32" height="32" viewBox="0 0 32 32" overflow="visible"><path d="M5.6 6.3L9.5 7.8C11 6 13 5.5 16 5.6C20 5.6 24 6.2 27.1 5.7L31.8 15.3L28.5 18L29.5 20C28.5 22 26 22.5 25 22C24.8 24 22.5 25 21 24.5C20.5 26.5 18 28.2 15 28.2L13.5 27C12 25 10 22 8 19.5L3.5 17.5L0 15.3Z" fill="#fff"/><g fill="none" stroke="#0e344b" stroke-width="1.1"><path d="M9.6 8C8.5 10 8.5 12.5 11 12.3C13 12 14 9.5 16.5 9.8C18 10 22 12.5 27.8 17"/><path d="M20.5 17.7L27 21.2M18.3 20.6L24.3 24.2M16.2 23.6L21.3 26.5"/></g><g stroke-linecap="round"><path d="M3.8 18.4L2.2 20.6M7.3 20.5L5.5 23M10.1 23L8.4 25.4M13.2 25.1L11.4 27.6" stroke="#0e344b" stroke-width="4.8"/><path d="M3.8 18.4L2.2 20.6M7.3 20.5L5.5 23M10.1 23L8.4 25.4M13.2 25.1L11.4 27.6" stroke="#fff" stroke-width="3.2"/></g></svg>
<svg class="a" style="left:24px;top:284.5px" width="32" height="32" viewBox="0 0 32 32" overflow="visible"><rect x="1" y="1" width="25" height="21" rx="2" fill="none" stroke="#fff" stroke-width="1.6"/><rect x="4.5" y="8" width="26" height="24" rx="2" fill="#0e344b" stroke="#fff" stroke-width="1.6"/><path d="M7 29V20l6 5 7-6 8 4v6z" fill="#fff"/><circle cx="22.5" cy="14" r="2.7" fill="#fff"/></svg>
<svg class="a" style="left:24px;top:348.5px" width="32" height="32" viewBox="0 0 32 32" overflow="visible"><path d="M2 1h19l8 8v22H2z" fill="none" stroke="#fff" stroke-width="2"/><path d="M6 7h10M6 12h12M6 17h8M6 22h8M6 27h8" stroke="#fff" stroke-width="1.6"/><text x="21" y="28" font-family="Liberation Sans" font-size="17" fill="#fff" text-anchor="middle">$</text></svg>
<svg class="a" style="left:24px;top:413px" width="32" height="32" viewBox="0 0 32 32" overflow="visible"><path d="M2 3c4-2 9-2 14 1 5-3 10-3 14-1v24c-4-2-9-2-14 1-5-3-10-3-14-1z" fill="none" stroke="#fff" stroke-width="1.8"/><path d="M16 4v24" stroke="#fff" stroke-width="1.5"/><text x="5" y="15" font-family="Liberation Sans" font-size="10" fill="#fff">A</text><text x="8.5" y="23" font-family="Liberation Sans" font-size="10" fill="#fff">P</text><text x="23" y="22" font-family="Liberation Sans" font-size="16" fill="#fff" text-anchor="middle">$</text></svg>
<svg class="a" style="left:24px;top:477px" width="32" height="32" viewBox="0 0 32 32" overflow="visible"><rect x="4" y="5" width="24" height="26" rx="1.5" fill="none" stroke="#fff" stroke-width="2"/><path d="M11 3h10v5H11z" fill="#0e344b" stroke="#fff" stroke-width="1.8"/><circle cx="16" cy="3" r="1.5" fill="none" stroke="#fff" stroke-width="1.4"/><path d="M10 19l4 4 8-9" fill="none" stroke="#fff" stroke-width="2"/></svg>
<svg class="a" style="left:24px;top:541px" width="32" height="32" viewBox="0 0 32 32" overflow="visible"><path d="M0 3h5l5 18h17l4-14H8" fill="none" stroke="#fff" stroke-width="2"/><circle cx="12" cy="27" r="2.6" fill="#fff"/><circle cx="26" cy="27" r="2.6" fill="#fff"/></svg>
<svg class="a" style="left:24px;top:605px" width="32" height="32" viewBox="0 0 32 32" overflow="visible"><rect x="1" y="5" width="30" height="26" rx="2" fill="none" stroke="#fff" stroke-width="2"/><path d="M1 6h30v5H1z" fill="#fff"/><path d="M8 1v6M24 1v6" stroke="#fff" stroke-width="2.6"/><path d="M16 14l2.2 4.6 5 .6-3.7 3.4 1 5-4.5-2.5-4.5 2.5 1-5-3.7-3.4 5-.6z" fill="#fff"/></svg>
<svg class="a" style="left:24px;top:669px" width="32" height="32" viewBox="0 0 32 32" overflow="visible"><path d="M1 19V8c0-4 3-7 7-7h17c4 0 6 3 6 7v11z" fill="#fff"/><path d="M2.5 18V8.5c0-3 2.2-6 5.5-6s5.5 3 5.5 6V18z" fill="#0e344b" stroke="#fff" stroke-width="0" /><path d="M2 18.5V8c0-3.5 2.5-6.2 6-6.2s6 2.7 6 6.2v10.5" fill="none" stroke="#fff" stroke-width="1.4"/><path d="M18 9h8v4h-3" fill="none" stroke="#0e344b" stroke-width="1.5"/><rect x="14" y="19" width="6" height="12" fill="#fff"/></svg>
<svg class="a" style="left:24px;top:733.5px" width="32" height="32" viewBox="0 0 32 32" overflow="visible"><path d="M0 3h19v20H0zM20 9h6l6 7v7H20z" fill="#fff"/><path d="M22 11h4l3.5 5H22z" fill="#0e344b"/><circle cx="7" cy="24" r="3.6" fill="#fff" stroke="#0e344b" stroke-width="1.5"/><circle cx="25" cy="24" r="3.6" fill="#fff" stroke="#0e344b" stroke-width="1.5"/></svg>
<svg class="a" style="left:24px;top:797.5px" width="32" height="32" viewBox="0 0 32 32" overflow="visible"><path d="M3 1h17l8 8v22H3z" fill="none" stroke="#fff" stroke-width="2"/><path d="M20 1v8h8z" fill="#fff"/><text x="15.5" y="24.5" font-family="Liberation Sans" font-size="13.5" font-weight="700" fill="#fff" text-anchor="middle" letter-spacing="-0.6">W2</text></svg>
<svg class="a" style="left:24px;top:861.5px" width="32" height="32" viewBox="0 0 32 32" overflow="visible"><rect x="1" y="5" width="30" height="22" rx="3" fill="none" stroke="#fff" stroke-width="2.4"/><path d="M2 8l14 10 14-10" fill="none" stroke="#fff" stroke-width="2.4"/></svg>
<svg class="a" style="left:24px;top:925.5px" width="32" height="32" viewBox="0 0 32 32" overflow="visible"><g fill="none" stroke="#fff" stroke-width="2" stroke-linejoin="round"><path d="M17.2 15.2H3A14.2 14.2 0 1 1 17.2 29.4Z"/><path d="M14.2 18.2H0.8A13.4 13.4 0 0 0 14.2 31.6Z"/></g></svg>
<svg class="a" style="left:24px;top:1017.5px" width="32" height="32" viewBox="0 0 32 32" overflow="visible"><path d="M27.48 12.49L31.59 12.40L31.59 19.60L27.48 19.51L26.60 21.63L29.57 24.48L24.48 29.57L21.63 26.60L19.51 27.48L19.60 31.59L12.40 31.59L12.49 27.48L10.37 26.60L7.52 29.57L2.43 24.48L5.40 21.63L4.52 19.51L0.41 19.60L0.41 12.40L4.52 12.49L5.40 10.37L2.43 7.52L7.52 2.43L10.37 5.40L12.49 4.52L12.40 0.41L19.60 0.41L19.51 4.52L21.63 5.40L24.48 2.43L29.57 7.52L26.60 10.37Z" fill="#fff"/><circle cx="16" cy="16" r="5.6" fill="#0e344b"/></svg>
<div class="a" style="left:13px;top:985px;width:54px;height:2px;background:#fff"></div>
<div class="a" id="bot"></div><div class="a" id="botsh"></div>
<svg class="a" style="left:95.9px;top:1562.0px" width="35" height="35" viewBox="0 0 35 35"><circle cx="17.5" cy="17.5" r="17.5" fill="#fff"/><circle cx="17.5" cy="17.5" r="12.3" fill="none" stroke="#0e344b" stroke-width="2.3"/><path d="M17 9.5v8.5l5.5 4.5" fill="none" stroke="#0e344b" stroke-width="2.3"/></svg>
<svg class="a" style="left:144.0px;top:1562.0px" width="35" height="35" viewBox="0 0 35 35"><circle cx="17.5" cy="17.5" r="17.5" fill="#fff"/><rect x="5.5" y="8.5" width="24" height="18" rx="2" fill="none" stroke="#0e344b" stroke-width="2.4"/><path d="M6.5 10l11 8 11-8" fill="none" stroke="#0e344b" stroke-width="2.4"/></svg>
<svg class="a" style="left:192.0px;top:1562.0px" width="35" height="35" viewBox="0 0 35 35"><circle cx="17.5" cy="17.5" r="17.5" fill="#fff"/><rect x="12.5" y="10.5" width="17" height="13" rx="1.5" fill="none" stroke="#0e344b" stroke-width="1.9"/><path d="M13 11.5l8 6 8-6" fill="none" stroke="#0e344b" stroke-width="1.9"/><path d="M5 13h5.5M5 17h5.5M5 21h5.5" stroke="#0e344b" stroke-width="1.5"/></svg>
<svg class="a" style="left:240.0px;top:1562.0px" width="35" height="35" viewBox="0 0 35 35"><circle cx="17.5" cy="17.5" r="17.5" fill="#fff"/><g stroke-linecap="round" stroke-width="3.4"><path d="M10 15h5.7" stroke="#36c5f0"/><path d="M20.3 9.9v5.7" stroke="#2eb67d"/><path d="M19.7 20.2h5.2" stroke="#ecb22e"/><path d="M14.9 20.2v4.6" stroke="#e01e5a"/></g><circle cx="15.5" cy="9.9" r="1.75" fill="#36c5f0"/><circle cx="24.9" cy="15" r="1.75" fill="#2eb67d"/><circle cx="19.8" cy="24.8" r="1.75" fill="#ecb22e"/><circle cx="10" cy="20.2" r="1.75" fill="#e01e5a"/></svg>
<div class="a" style="left:288px;top:1562px;width:2px;height:36px;background:#fff"></div>
<div class="a" style="left:305px;top:1559px;width:125px;height:41px;background:#fff;border-radius:5px"></div>
<div class="a t" style="left:367.5px;transform:translateX(-50%);top:1569px;font-size:23px;line-height:23px;letter-spacing:-0.066px;color:#0e344b;font-weight:400;">agenda</div>
<div class="a" style="left:438px;top:1559px;width:139px;height:41px;background:#fff;border-radius:5px"></div>
<div class="a t" style="left:507.5px;transform:translateX(-50%);top:1569px;font-size:23px;line-height:23px;letter-spacing:0.141px;color:#0e344b;font-weight:400;">calendar</div>
<div class="a" style="left:585px;top:1559px;width:133px;height:41px;background:#fff;border-radius:5px"></div>
<div class="a t" style="left:651.5px;transform:translateX(-50%);top:1569px;font-size:23px;line-height:23px;letter-spacing:-0.785px;color:#0e344b;font-weight:400;">TO-DO&#x27;s</div>
<div class="a" style="left:726px;top:1559px;width:264px;height:41px;background:#fff;border-radius:5px"></div>
<div class="a t" style="left:858.0px;transform:translateX(-50%);top:1569px;font-size:23px;line-height:23px;letter-spacing:-0.244px;color:#0e344b;font-weight:400;">New Accounts Per ...</div>
<div class="a" style="left:998px;top:1559px;width:141.5px;height:41px;background:#fff;border-radius:5px"></div>
<div class="a t" style="left:1068.75px;transform:translateX(-50%);top:1569px;font-size:23px;line-height:23px;letter-spacing:-0.071px;color:#0e344b;font-weight:400;">Calendar</div>
<svg class="a" style="left:1156px;top:1561.5px" width="35" height="35" viewBox="0 0 35 35"><circle cx="17.5" cy="17.5" r="17.5" fill="#fff"/><path d="M6 29L7.88 22.88L25.38 5.38L29.62 9.62L12.12 27.12Z" fill="#0e344b"/></svg>
<svg class="a" style="left:2169.5px;top:1563px" width="35" height="35" viewBox="0 0 35 35"><circle cx="17.5" cy="17.5" r="17.5" fill="#fff"/><rect x="4.5" y="12" width="26" height="12" rx="6" fill="#0e344b"/><circle cx="24.3" cy="18" r="4.3" fill="#fff"/></svg>
</body></html>
